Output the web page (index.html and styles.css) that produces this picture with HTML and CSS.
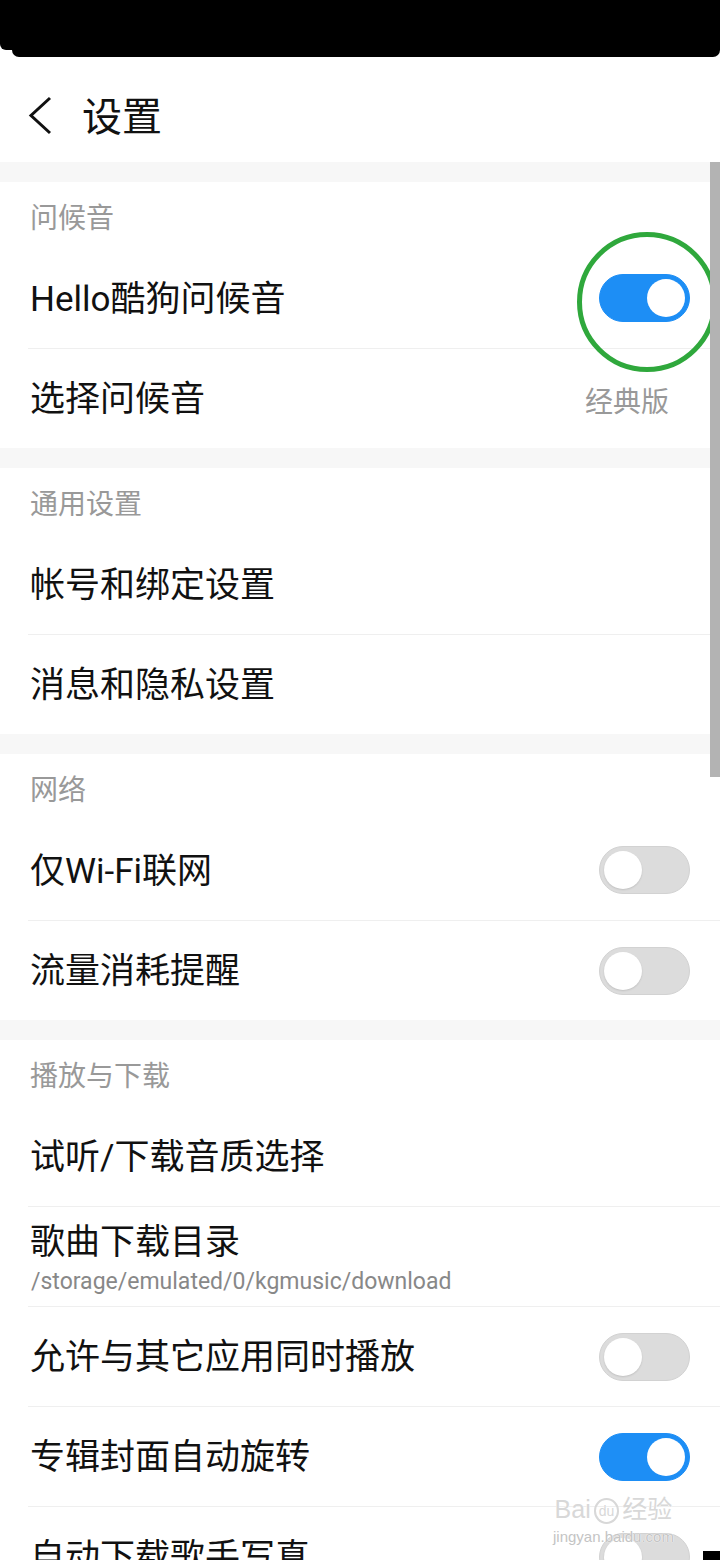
FILE: index.html
```html
<!DOCTYPE html>
<html lang="zh-CN">
<head>
    <meta charset="UTF-8">
    <meta name="viewport" content="width=device-width, initial-scale=1.0">
    <title>设置</title>
    <link rel="stylesheet" href="styles.css">
</head>
<body>
    <div class="page">
        <div class="statusbar">
            <div class="statusbar-top"></div>
            <div class="statusbar-lip"></div>
        </div>

        <div class="header">
            <svg class="back" width="26" height="40" viewBox="0 0 26 40">
                <path d="M22 2 L3 19.5 L22 37" fill="none" stroke="#111" stroke-width="3"/>
            </svg>
            <span class="title">设置</span>
        </div>

        <div class="gap"></div>
        <div class="section-title">问候音</div>
        <div class="row">
            <span class="label">Hello酷狗问候音</span>
            <div class="switch-wrap">
                <div class="switch on"><div class="knob"></div></div>
                <div class="mark"></div>
            </div>
        </div>
        <div class="row">
            <span class="label">选择问候音</span>
            <span class="value">经典版</span>
        </div>

        <div class="gap"></div>
        <div class="section-title">通用设置</div>
        <div class="row"><span class="label">帐号和绑定设置</span></div>
        <div class="row"><span class="label">消息和隐私设置</span></div>

        <div class="gap"></div>
        <div class="section-title">网络</div>
        <div class="row">
            <span class="label">仅Wi-Fi联网</span>
            <div class="switch"><div class="knob"></div></div>
        </div>
        <div class="row">
            <span class="label">流量消耗提醒</span>
            <div class="switch"><div class="knob"></div></div>
        </div>

        <div class="gap"></div>
        <div class="section-title">播放与下载</div>
        <div class="row"><span class="label">试听/下载音质选择</span></div>
        <div class="row row-sub">
            <span class="label">歌曲下载目录</span>
            <span class="sub">/storage/emulated/0/kgmusic/download</span>
        </div>
        <div class="row">
            <span class="label">允许与其它应用同时播放</span>
            <div class="switch"><div class="knob"></div></div>
        </div>
        <div class="row">
            <span class="label">专辑封面自动旋转</span>
            <div class="switch on"><div class="knob"></div></div>
        </div>
        <div class="row">
            <span class="label">自动下载歌手写真</span>
            <div class="switch"><div class="knob"></div></div>
        </div>

        <!-- overlays -->
        <div class="scrollbar"></div>
        <div class="watermark">
            <div class="wm-logo">Bai<span class="wm-du">du</span>经验</div>
            <div class="wm-url">jingyan.baidu.com</div>
        </div>
        <div class="corner"></div>
    </div>
</body>
</html>
```

FILE: styles.css
```css
/* CSS */
body {
    margin: 0;
    padding: 0;
    background-color: #fff;
    font-family: Roboto, "Noto Sans CJK SC", sans-serif;
    color: #111;
}

.page {
    position: relative;
    width: 720px;
    height: 1560px;
    overflow: hidden;
    background-color: #fff;
}

.statusbar-top {
    height: 50px;
    background-color: #000;
    border-bottom-left-radius: 6px;
}

.statusbar-lip {
    height: 7px;
    margin-left: 12px;
    background-color: #000;
    border-radius: 0 0 12px 12px;
}

.header {
    height: 105px;
    box-sizing: border-box;
    padding: 17px 0 0 28px;
    display: flex;
    align-items: center;
}

.back {
    display: block;
    margin-top: -4px;
}

.title {
    margin-left: 28px;
    font-size: 40px;
    line-height: 1;
    color: #111;
}

.gap {
    height: 20px;
    background-color: #f7f7f7;
}

.section-title {
    height: 66px;
    box-sizing: border-box;
    padding: 2px 0 0 30px;
    display: flex;
    align-items: center;
    font-size: 28px;
    color: #999;
}

.row {
    height: 100px;
    box-sizing: border-box;
    margin-left: 28px;
    padding: 3px 30px 0 2px;
    display: flex;
    align-items: center;
    justify-content: space-between;
}

.row + .row {
    border-top: 1px solid #efefef;
}

.label {
    font-size: 35px;
    line-height: 40px;
    color: #111;
}

.value {
    margin-right: 21px;
    font-size: 28px;
    color: #999;
}

.row-sub {
    flex-direction: column;
    align-items: flex-start;
    justify-content: center;
    padding-top: 6px;
}

.row-sub .sub {
    margin-top: 5px;
    margin-left: 1px;
    font-size: 23px;
    line-height: 28px;
    color: #888;
}

.switch {
    width: 91px;
    height: 48px;
    box-sizing: border-box;
    border-radius: 24px;
    background-color: #dcdcdc;
    border: 1px solid #d2d2d2;
    padding: 4px;
    display: flex;
    align-items: center;
}

.row .switch,
.row .switch-wrap {
    margin-top: -3px;
}

.switch-wrap .switch {
    margin-top: 0;
}

.switch .knob {
    width: 38px;
    height: 38px;
    border-radius: 50%;
    background-color: #fff;
    box-shadow: 0 1px 2px rgba(0, 0, 0, 0.12);
}

.switch.on {
    background-color: #1d8ef5;
    border-color: #1d8ef5;
    justify-content: flex-end;
}

.switch.on .knob {
    box-shadow: none;
}

.switch-wrap {
    position: relative;
}

/* green highlight ring drawn on the screenshot */
.mark {
    position: absolute;
    left: -22px;
    top: -42px;
    width: 140px;
    height: 140px;
    box-sizing: border-box;
    border: 5px solid #2fa83c;
    border-radius: 50%;
}

.scrollbar {
    position: absolute;
    right: 0;
    top: 162px;
    width: 10px;
    height: 615px;
    background-color: #b3b3b3;
}

.watermark {
    position: absolute;
    left: 553px;
    top: 1494px;
    white-space: nowrap;
    text-align: center;
    color: #d8d8d8;
    font-family: "Liberation Sans", "Noto Sans CJK SC", sans-serif;
    text-shadow: 0 0 1px #fff, 0 0 1px #fff;
}

.wm-logo {
    font-size: 25px;
    line-height: 30px;
}

.wm-du {
    display: inline-block;
    font-size: 14px;
    line-height: 16px;
    padding: 3px 3px;
    margin: 0 3px;
    border: 2px solid #d8d8d8;
    border-radius: 50%;
    vertical-align: middle;
}

.wm-url {
    font-size: 15px;
    line-height: 18px;
    margin-top: 4px;
    color: #c4c4c4;
}

.corner {
    position: absolute;
    right: 0;
    bottom: 0;
    width: 17px;
    height: 9px;
    background-color: #000;
}
```
